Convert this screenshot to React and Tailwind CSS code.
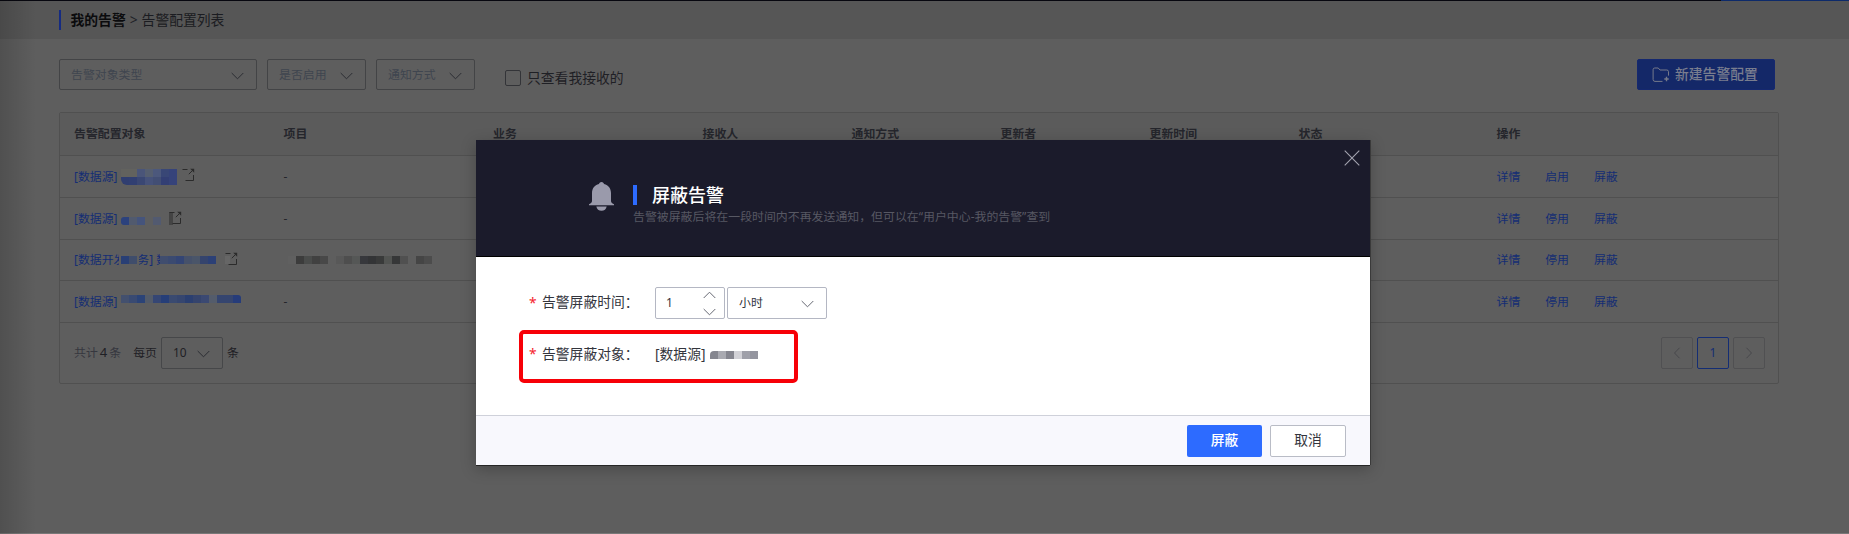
import React from "react";

const columns = [
  ["告警配置对象", "w-[209.5px]"],
  ["项目", "w-[209.5px]"],
  ["业务", "w-[209.5px]"],
  ["接收人", "w-[149px]"],
  ["通知方式", "w-[149px]"],
  ["更新者", "w-[149px]"],
  ["更新时间", "w-[149px]"],
  ["状态", "w-[198px]"],
  ["操作", "w-[200px]"],
];

// Masked names are drawn as rows of 8px colour blocks.
function Mosaic({ rows, size = 8, className = "" }) {
  const width = Math.max(...rows.map((r) => r.length)) * size;
  return (
    <svg width={width} height={rows.length * size} shapeRendering="crispEdges" className={`shrink-0 ${className}`}>
      {rows.map((row, y) =>
        row.map((fill, x) =>
          fill ? <rect key={`${x}-${y}`} x={x * size} y={y * size} width={size} height={size} fill={fill} /> : null
        )
      )}
    </svg>
  );
}

function Chevron({ className = "", up = false, stroke = "#2b2d33", w = 13 }) {
  return (
    <svg width={w} height="8" viewBox="0 0 13 8" fill="none" stroke={stroke} strokeWidth="1" className={`shrink-0 ${className}`}>
      <path d={up ? "M0.7 7 L6.5 1.2 L12.3 7" : "M0.7 1 L6.5 6.8 L12.3 1"} />
    </svg>
  );
}

function OpenIcon({ className = "", patch }) {
  return (
    <svg width="13" height="14" viewBox="0 0 13 14" fill="none" stroke="#2b2b2b" className={`shrink-0 ${className}`}>
      {patch === "dark" && <rect x="0" y="1" width="4" height="13" fill="#444" stroke="none" />}
      {patch === "light" && <rect x="0" y="4" width="5" height="8" fill="#666" stroke="none" />}
      <path d="M0.5 1.5H5.5" />
      <path d="M3.5 12.5H11.5V7" />
      <path d="M6.8 6.2L10.5 2.5" />
      <path d="M8.2 0.8H12.2V4.8Z" fill="#2b2b2b" stroke="none" />
    </svg>
  );
}

function Filter({ label, className }) {
  return (
    <div className={`flex h-[31px] items-center justify-between rounded-[2px] border border-[#434446] pr-3 pl-[11px] text-[#3f454f] ${className}`}>
      <span>{label}</span>
      <Chevron className="mt-[2px]" />
    </div>
  );
}

const rows = [
  {
    target: (
      <>
        [数据源]
        <Mosaic
          className="mt-px ml-[3px] rounded-bl-[6px]"
          rows={[
            ["#62625e", "#62625e", "#4a5579", "#555e70", "#4c587c", "#394776", "#36437a"],
            ["#303e70", "#313f72", "#3a4773", "#46527a", "#424e74", "#333f74", "#36437a"],
          ]}
        />
        <OpenIcon className="mb-[2px] ml-[5px]" />
      </>
    ),
    action: "启用",
    height: "h-[42px]",
  },
  {
    target: (
      <>
        [数据源]
        <Mosaic className="mt-[5px] ml-[3px] rounded-l-[3px]" rows={[["#2c427d", "#515a6e", "#45547c", "#5d5e60", "#525a70"]]} />
        <OpenIcon className="mb-[1px] ml-[8px]" patch="dark" />
      </>
    ),
    action: "停用",
    height: "h-[42px]",
  },
  {
    target: (
      <div className="relative flex items-center">
        <span className="w-[142px]">[数据开发任务] 数</span>
        <OpenIcon className="mb-[2px] ml-[9px]" patch="light" />
        <span className="absolute inset-y-0 left-[45px] flex w-[20px] items-center bg-[#5e5e5e]">
          <Mosaic className="ml-[2px]" rows={[["#293f75", "#3f4d6b"]]} />
        </span>
        <span className="absolute inset-y-0 left-[86px] flex w-[58px] items-center bg-[#5e5e5e]">
          <Mosaic rows={[["#404d6e", "#3b4a70", "#344574", "#46516a", "#4a5569", "#35446d", "#2c4076"]]} />
        </span>
      </div>
    ),
    project: (
      <Mosaic
        className="ml-[4px]"
        rows={[["#606060", "#3c3c3c", "#4a4c4b", "#414141", "#484848", null, "#585858", "#4e4e4e", "#555756", "#37383c", "#333436", "#393a3a", "#525452", "#363738", "#505050", null, "#454545", "#4c4c4c"]]}
      />
    ),
    action: "停用",
    height: "h-[41px]",
  },
  {
    target: (
      <>
        [数据源]
        <Mosaic
          className="mb-[5px] ml-[3px] rounded-tr-[3px]"
          rows={[["#43506e", "#394a72", "#2b4377", "#535b69", "#354674", "#263e78", "#3a4a70", "#36466f", "#2b3f70", "#35446d", "#3b4972", "#545c6b", "#35456f", "#35456f", "#263c7a"]]}
        />
      </>
    ),
    action: "停用",
    height: "h-[42px]",
  },
];

function Page() {
  return (
    <div className="flex h-full flex-col">
      <div className="flex h-px shrink-0 bg-[#07070f]">
        <div className="ml-auto w-[128px] bg-[#0d2a6a]" />
      </div>
      <div className="flex h-[38px] shrink-0 items-center bg-[#565656] pl-[59px] text-[13.8px]">
        <div className="h-5 w-[1.5px] bg-[#152b82]" />
        <span className="mt-px ml-[10px] font-semibold text-[#0b0b0d]">我的告警</span>
        <span className="mx-1 mt-px text-[#202126]">&gt;</span>
        <span className="mt-px text-[#1b1c21]">告警配置列表</span>
      </div>

      <div className="mt-5 flex h-[31px] pl-[59px]">
        <Filter label="告警对象类型" className="w-[198px]" />
        <Filter label="是否启用" className="ml-[10px] w-[99px]" />
        <Filter label="通知方式" className="ml-[10px] w-[99px]" />
        <div className="ml-[30px] flex items-center pt-[7px] text-[13.8px] text-[#1f2025]">
          <span className="mr-[6px] size-4 rounded-[2px] border border-[#333438]" />
          <span>只查看我接收的</span>
        </div>
        <button className="mr-[74px] ml-auto flex w-[138px] items-center rounded-[2px] border border-[#15286f] bg-[#142868] pl-[14px] text-[13.8px] font-medium text-[#797d8e]">
          <svg width="18" height="16" viewBox="0 0 18 16" fill="none" stroke="#75798a" strokeWidth="1">
            <path d="M10.5 14.4H3A1.9 1.9 0 0 1 1.1 12.5V2.6A1.6 1.6 0 0 1 2.7 1H6.2L8 3H14.8A1.7 1.7 0 0 1 16.5 4.7V8.6" />
            <path d="M14.5 9.8V14.2M12.3 12H16.7" strokeWidth="1.4" />
          </svg>
          <span className="ml-[5px] whitespace-nowrap">新建告警配置</span>
        </button>
      </div>

      <div className="mt-[22px] ml-[59px] w-[1720px] rounded-[2px] border border-[#505050]">
        <div className="flex h-[43px] items-center border-b border-[#505050] bg-[#5b5b5b] font-semibold text-[#25262c]">
          {columns.map(([name, width]) => (
            <div key={name} className={`shrink-0 pl-[14px] ${width}`}>{name}</div>
          ))}
        </div>
        {rows.map((row, i) => (
          <div key={i} className={`flex items-center border-b border-[#505050] ${row.height}`}>
            <div className="flex w-[209.5px] items-center pl-[14px] whitespace-nowrap text-[#142d74]">{row.target}</div>
            <div className="w-[209.5px] pl-[14px] text-[#25262b]">{row.project || "-"}</div>
            <div className="ml-[1003px] flex gap-[24.9px] pl-[14.5px] text-[#142d74]">
              <span>详情</span>
              <span>{row.action}</span>
              <span>屏蔽</span>
            </div>
          </div>
        ))}
        <div className="flex h-[60px] items-center pr-[13px] pl-[14px] text-[#1f2025]">
          <span className="text-[#36373f]">共计</span>
          <span className="mr-[2px] ml-[2px] text-[13px]">4</span>
          <span className="text-[#36373f]">条</span>
          <span className="ml-[12px]">每页</span>
          <div className="ml-[4px] flex h-8 w-[62px] items-center justify-between rounded-[2px] border border-[#464749] pr-3 pl-[11px]">
            <span>10</span>
            <Chevron className="mt-[2px]" />
          </div>
          <span className="ml-[4px]">条</span>
          <div className="ml-auto flex gap-1">
            <div className="flex size-8 items-center justify-center rounded-[2px] border border-[#505052]">
              <svg width="8" height="12" viewBox="0 0 8 12" fill="none" stroke="#48484c"><path d="M6.5 0.8L1.5 6L6.5 11.2" /></svg>
            </div>
            <div className="flex size-8 items-center justify-center rounded-[2px] border border-[#142d74] text-[#142d74]">1</div>
            <div className="flex size-8 items-center justify-center rounded-[2px] border border-[#505052]">
              <svg width="8" height="12" viewBox="0 0 8 12" fill="none" stroke="#48484c"><path d="M1.5 0.8L6.5 6L1.5 11.2" /></svg>
            </div>
          </div>
        </div>
      </div>
      <div className="mt-auto h-px bg-[#787878]" />
    </div>
  );
}

function Dialog() {
  return (
    <div className="absolute top-[140px] left-[476px] flex h-[325px] w-[894px] flex-col bg-white text-[#33353d] shadow-[0_1px_0_#262626,1px_0_0_#3a3a3a,0_4px_14px_rgba(0,0,0,0.25)]">
      <div className="flex h-[117px] shrink-0 border-b border-black bg-[#1b1b2b]">
        <svg width="26" height="30" viewBox="0 0 26 30" className="mt-[42px] ml-[113px]" fill="#9a9aab">
          <path d="M12.5 0C14 0 14.8 1 15 2C19.6 3.2 22 6.8 22 11V19C22 20.2 22.8 21.2 25 22.2V23.3H0V22.2C2.2 21.2 3 20.2 3 19V11C3 6.8 5.4 3.2 10 2C10.2 1 11 0 12.5 0Z" />
          <path d="M7.3 24.4H17.7C17.2 27 15.2 28.8 12.5 28.8S7.8 27 7.3 24.4Z" />
        </svg>
        <div className="mt-[44px] ml-[18px]">
          <div className="flex h-[21px] items-center">
            <div className="h-5 w-1 bg-[#2d6bff]" />
            <h2 className="mt-px ml-[15px] text-[18px] leading-6 font-medium text-white">屏蔽告警</h2>
          </div>
          <p className="mt-[2px] text-[11.92px] leading-[18px] text-[#575863]">告警被屏蔽后将在一段时间内不再发送通知，但可以在“用户中心-我的告警”查到</p>
        </div>
        <svg width="16" height="16" viewBox="0 0 16 16" className="mt-[9.5px] mr-[10px] ml-auto" stroke="#a3a3af" strokeWidth="1.1">
          <path d="M0.7 0.7L15.3 15.3M15.3 0.7L0.7 15.3" />
        </svg>
      </div>

      <div className="h-[158px] shrink-0 pt-[30px] text-[13.8px]">
        <div className="flex h-8 items-center pl-[53px]">
          <span className="w-[13px] text-[#f5222d]">*</span>
          <span className="-mt-px flex w-[113px] whitespace-nowrap">告警屏蔽时间<span>：</span></span>
          <div className="flex h-8 w-[70px] items-center justify-between rounded-[2px] border border-[#b4b7c3] pr-2 pl-[10px] text-[12px]">
            <span>1</span>
            <span className="flex flex-col gap-[9px]">
              <Chevron up stroke="#666873" />
              <Chevron stroke="#666873" />
            </span>
          </div>
          <div className="ml-[2px] flex h-8 w-[100px] items-center justify-between rounded-[2px] border border-[#b4b7c3] pr-3 pl-[11px] text-[11.9px]">
            <span>小时</span>
            <Chevron className="mt-[2px]" stroke="#666873" />
          </div>
        </div>
        <div className="mt-[11px] ml-[43px] flex h-[53px] w-[279px] items-start rounded-[5px] border-4 border-[#f70007] pt-[10px] pl-[6px]">
          <span className="w-[13px] text-[#f5222d]">*</span>
          <span className="flex w-[113px] whitespace-nowrap">告警屏蔽对象<span>：</span></span>
          <span className="whitespace-nowrap">[数据源]</span>
          <Mosaic className="mt-[7px] ml-[5px] rounded-tl-[4px]" rows={[["#85868f", "#a9aab1", "#85868f", "#d2d2d7", "#9fa0a9", "#94959f"]]} />
        </div>
      </div>

      <div className="flex grow items-center justify-end gap-2 border-t border-[#cfd1da] bg-[#f8f8fd] pr-6 text-[13.8px]">
        <button className="h-8 w-[75px] rounded-[2px] bg-[#2d6bff] font-medium text-white">屏蔽</button>
        <button className="h-8 w-[76px] rounded-[2px] border border-[#b9bcc6] bg-white">取消</button>
      </div>
    </div>
  );
}

export default function App() {
  return (
    <div
      lang="zh-CN"
      className="relative h-[534px] w-[1849px] overflow-hidden bg-[#5e5e5e] font-['Noto_Sans','Noto_Sans_CJK_SC',sans-serif] text-[11.9px]"
    >
      <Page />
      <div className="pointer-events-none absolute inset-y-0 left-0 w-9 bg-gradient-to-r from-black/15 to-transparent" />
      <Dialog />
    </div>
  );
}
